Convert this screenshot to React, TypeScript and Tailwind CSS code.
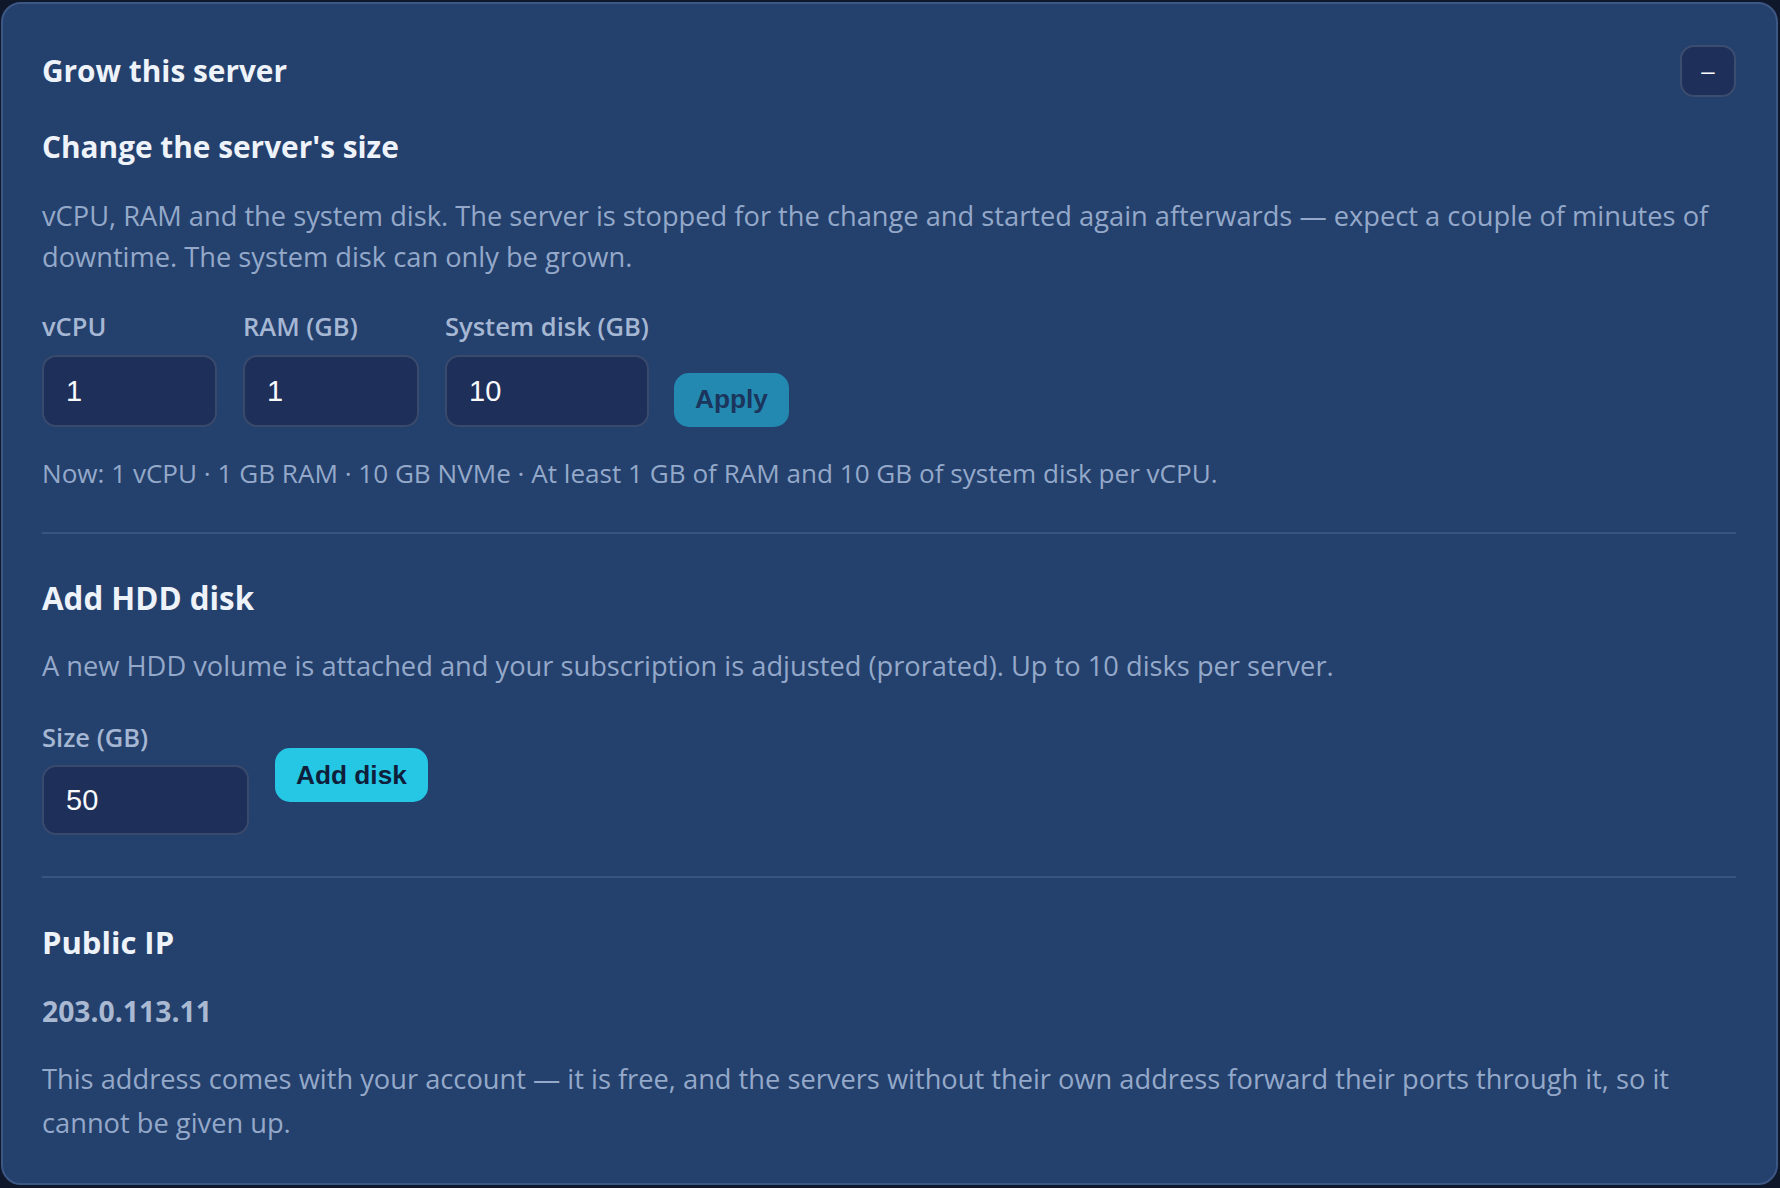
import { useState } from "react";

type FieldProps = {
  label: string;
  value: string;
  width: string;
  onChange: (v: string) => void;
};

function Field({ label, value, width, onChange }: FieldProps) {
  return (
    <label className="flex flex-col">
      <span className="text-[25.5px] leading-[34px] font-semibold text-[#a5b7d3]">{label}</span>
      <input
        type="text"
        inputMode="numeric"
        value={value}
        onChange={(e) => onChange(e.target.value)}
        className={`${width} mt-[12px] h-[72px] rounded-[14px] border-2 border-[#394a6c] bg-[#1e3059] pr-[20px] pl-[22px] font-['Liberation_Sans',Arial,sans-serif] text-[29px] text-[#f8fafc] outline-none`}
      />
    </label>
  );
}

export default function App() {
  const [open, setOpen] = useState(true);
  const [vcpu, setVcpu] = useState("1");
  const [ram, setRam] = useState("1");
  const [disk, setDisk] = useState("10");
  const [hdd, setHdd] = useState("50");

  return (
    <div className="min-h-screen bg-[#0f172a] pt-[2px] pl-[1px] pr-[2px] font-['Open_Sans',sans-serif]">
      <section className="rounded-[20px] border-2 border-[#3d5784] bg-[#24406d] pt-[40px] pr-[40px] pb-[38px] pl-[39px]">
        {/* En-tête */}
        <div className="flex h-[53px] items-center justify-between">
          <h2 className="text-[29.8px] leading-[40px] font-bold text-[#eef3fa]">Grow this server</h2>
          <button
            type="button"
            onClick={() => setOpen(!open)}
            className="flex h-[52px] w-[56px] items-center justify-center rounded-[14px] border-2 border-[#3c4d70] bg-[#1e3059] font-['Liberation_Sans',Arial,sans-serif] text-[24px] leading-none text-white"
          >
            –
          </button>
        </div>

        {open && (
          <>
            {/* Taille du serveur */}
            <h3 className="mt-[30px] text-[29.8px] leading-[40px] font-bold text-[#eef3fa]">Change the server's size</h3>
            <p className="mt-[27.5px] text-[27.25px] leading-[41.5px] text-[#94a9c9]">
              vCPU, RAM and the system disk. The server is stopped for the change and started again afterwards — expect a
              couple of minutes of downtime. The system disk can only be grown.
            </p>

            <div className="mt-[31.5px] flex items-end gap-[26px]">
              <Field label="vCPU" value={vcpu} width="w-[175px]" onChange={setVcpu} />
              <Field label="RAM (GB)" value={ram} width="w-[176px]" onChange={setRam} />
              <Field label="System disk (GB)" value={disk} width="w-[204px]" onChange={setDisk} />
              <button
                type="button"
                className="-ml-[1px] flex h-[54px] items-center rounded-[15px] bg-[#2389b1] px-[21px] font-['Liberation_Sans',Arial,sans-serif] text-[26.25px] font-bold text-[#1b355c]"
              >
                Apply
              </button>
            </div>

            <p className="mt-[28px] text-[26.1px] leading-[36px] text-[#94a9c9]">
              Now: 1 vCPU · 1 GB RAM · 10 GB NVMe · At least 1 GB of RAM and 10 GB of system disk per vCPU.
            </p>

            <div className="mt-[40.5px] h-[2px] bg-[#3a5480]" />

            {/* Disque HDD */}
            <h3 className="mt-[44px] text-[31.3px] leading-[40px] font-bold text-[#eef3fa]">Add HDD disk</h3>
            <p className="mt-[27.75px] text-[27.25px] leading-[41.5px] text-[#94a9c9]">
              A new HDD volume is attached and your subscription is adjusted (prorated). Up to 10 disks per server.
            </p>

            <div className="mt-[32.75px] flex items-center gap-[26px]">
              <label className="flex flex-col">
                <span className="text-[25.5px] leading-[34px] font-semibold text-[#a5b7d3]">Size (GB)</span>
                <input
                  type="text"
                  inputMode="numeric"
                  value={hdd}
                  onChange={(e) => setHdd(e.target.value)}
                  className="mt-[11.5px] h-[70px] w-[207px] rounded-[14px] border-2 border-[#394a6c] bg-[#1e3059] pr-[20px] pl-[22px] font-['Liberation_Sans',Arial,sans-serif] text-[29px] text-[#f8fafc] outline-none"
                />
              </label>
              <button
                type="button"
                className="mt-[-4px] flex h-[54px] items-center rounded-[15px] bg-[#25c7e5] px-[21px] font-['Liberation_Sans',Arial,sans-serif] text-[26.25px] font-bold text-[#0f1f3b]"
              >
                Add disk
              </button>
            </div>

            <div className="mt-[40.7px] h-[2px] bg-[#3a5480]" />

            {/* IP publique */}
            <h3 className="mt-[44.3px] text-[31px] leading-[40px] font-bold text-[#eef3fa]">Public IP</h3>
            <div className="mt-[29.8px] text-[28.3px] leading-[38px] font-bold text-[#a9b9d2]">203.0.113.11</div>
            <p className="mt-[26.8px] text-[27.25px] leading-[44px] text-[#94a9c9]">
              This address comes with your account — it is free, and the servers without their own address forward their
              ports through it, so it cannot be given up.
            </p>
          </>
        )}
      </section>
    </div>
  );
}
